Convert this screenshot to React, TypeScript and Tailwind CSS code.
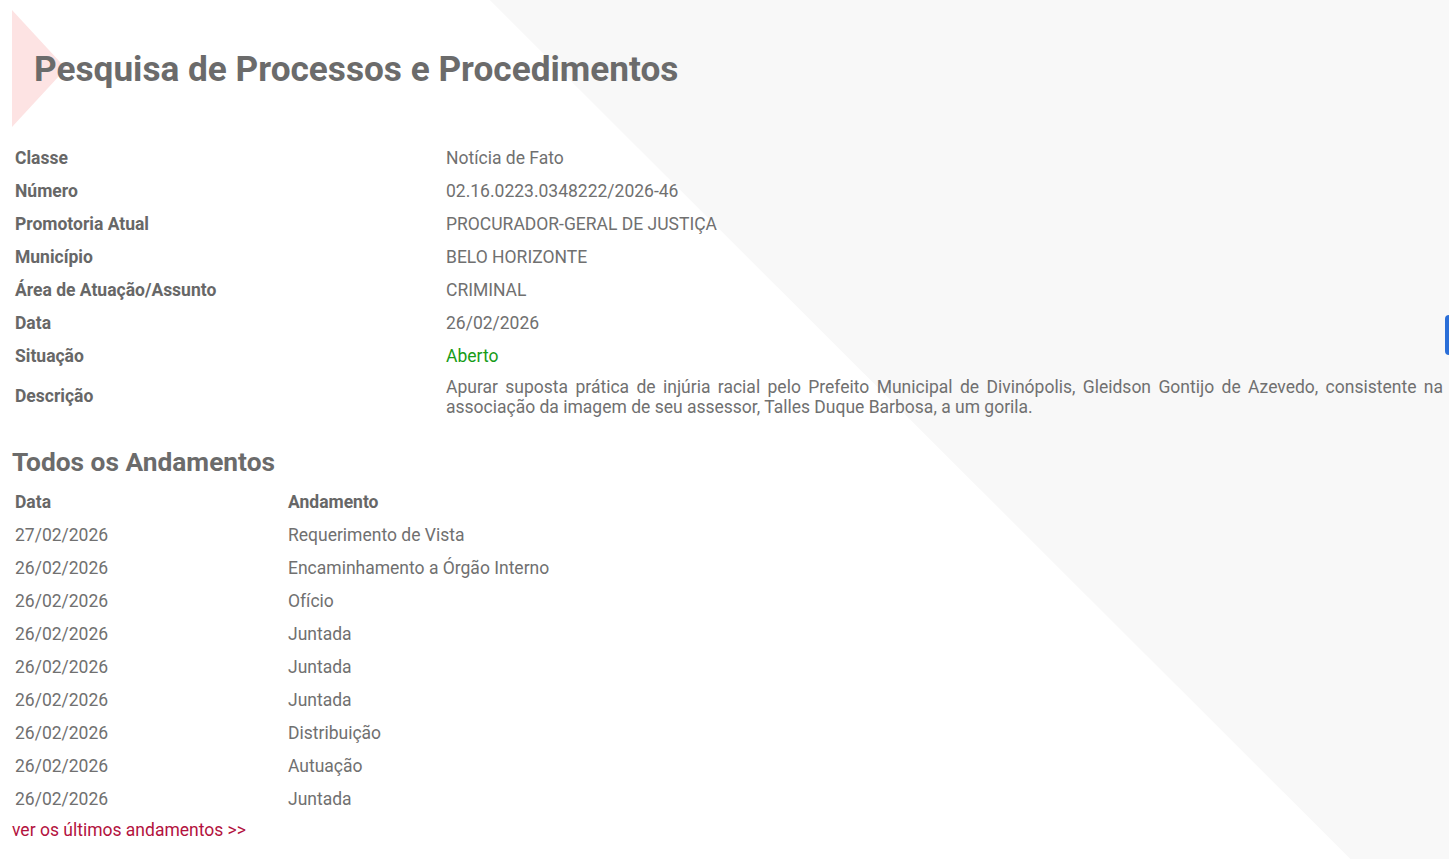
const detalhes: { label: string; value: string; green?: boolean }[] = [
  { label: "Classe", value: "Notícia de Fato" },
  { label: "Número", value: "02.16.0223.0348222/2026-46" },
  { label: "Promotoria Atual", value: "PROCURADOR-GERAL DE JUSTIÇA" },
  { label: "Município", value: "BELO HORIZONTE" },
  { label: "Área de Atuação/Assunto", value: "CRIMINAL" },
  { label: "Data", value: "26/02/2026" },
  { label: "Situação", value: "Aberto", green: true },
];

const andamentos = [
  ["27/02/2026", "Requerimento de Vista"],
  ["26/02/2026", "Encaminhamento a Órgão Interno"],
  ["26/02/2026", "Ofício"],
  ["26/02/2026", "Juntada"],
  ["26/02/2026", "Juntada"],
  ["26/02/2026", "Juntada"],
  ["26/02/2026", "Distribuição"],
  ["26/02/2026", "Autuação"],
  ["26/02/2026", "Juntada"],
];

const App = () => {
  return (
    <div className="relative min-h-screen w-full overflow-hidden bg-white font-['Roboto',sans-serif] text-[17.5px] text-[#707070]">
      {/* fundo diagonal */}
      <div className="absolute inset-0 bg-[#f8f8f8] [clip-path:polygon(33.8%_0,100%_0,100%_100%,93.2%_100%)]" />
      {/* triângulo rosa */}
      <div className="absolute left-[12px] top-[10px] h-[117px] w-[54px] bg-[#fde3e3] [clip-path:polygon(0_0,100%_50%,0_100%)]" />
      {/* botão flutuante lateral */}
      <div className="absolute right-0 top-[315px] h-[40px] w-[4px] rounded-l-md bg-[#2b6fd8]" />

      <div className="relative pl-[12px] pr-[3px]">
        <div className="flex h-[142px] items-center pb-[5px] pl-[22px]">
          <h1 className="text-[35.2px] font-bold leading-[40px] text-[#6b6b6b]">
            Pesquisa de Processos e Procedimentos
          </h1>
        </div>

        <div className="grid grid-cols-[431px_1fr]">
          {detalhes.map((d) => (
            <div key={d.label} className="contents">
              <div className="flex h-[33px] items-center px-[3px] font-bold text-[#676767]">{d.label}</div>
              <div
                className={
                  d.green
                    ? "flex h-[33px] items-center px-[3px] text-[#179c17]"
                    : "flex h-[33px] items-center px-[3px]"
                }
              >
                {d.value}
              </div>
            </div>
          ))}
          <div className="flex items-center px-[3px] font-bold text-[#676767]">Descrição</div>
          <div className="px-[3px] py-[3.5px] text-justify leading-[20px]">
            Apurar suposta prática de injúria racial pelo Prefeito Municipal de Divinópolis, Gleidson Gontijo de
            Azevedo, consistente na associação da imagem de seu assessor, Talles Duque Barbosa, a um gorila.
          </div>
        </div>

        <h2 className="mt-[27px] h-[30px] text-[26.3px] font-bold leading-[30px] text-[#6b6b6b]">Todos os Andamentos</h2>

        <div className="mt-[9px] grid grid-cols-[273px_1fr]">
          <div className="flex h-[33px] items-center px-[3px] font-bold text-[#676767]">Data</div>
          <div className="flex h-[33px] items-center px-[3px] font-bold text-[#676767]">Andamento</div>
          {andamentos.map(([data, texto], i) => (
            <div key={i} className="contents">
              <div className="flex h-[33px] items-center px-[3px]">{data}</div>
              <div className="flex h-[33px] items-center px-[3px]">{texto}</div>
            </div>
          ))}
        </div>

        <a href="#" className="mt-[3.5px] block leading-[20px] text-[#b3123e]">
          ver os últimos andamentos &gt;&gt;
        </a>
      </div>
    </div>
  );
};

export default App;
